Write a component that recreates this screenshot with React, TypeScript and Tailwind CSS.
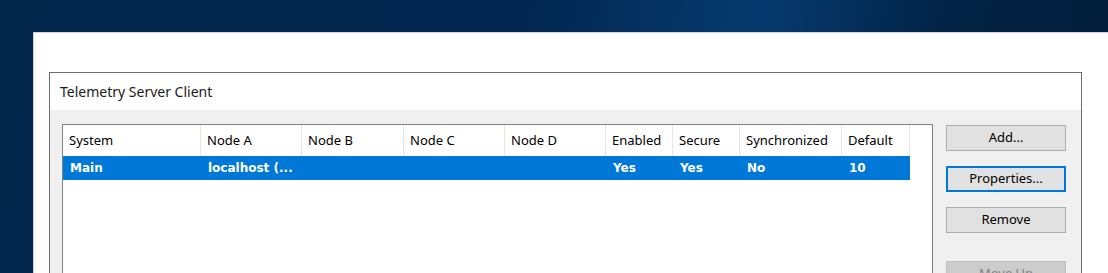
import React from 'react';

const columns = [
  { label: 'System', width: 'w-[138px]', value: 'Main' },
  { label: 'Node A', width: 'w-[101px]', value: 'localhost (...' },
  { label: 'Node B', width: 'w-[102px]', value: '' },
  { label: 'Node C', width: 'w-[101px]', value: '' },
  { label: 'Node D', width: 'w-[101px]', value: '' },
  { label: 'Enabled', width: 'w-[67px]', value: 'Yes' },
  { label: 'Secure', width: 'w-[67px]', value: 'Yes' },
  { label: 'Synchronized', width: 'w-[102px]', value: 'No' },
  { label: 'Default', width: 'w-[68px]', value: '10' },
];

const ui = { fontFamily: '"Segoe UI", "Noto Sans", sans-serif' };
const bold = { fontFamily: 'Tahoma, "DejaVu Sans", sans-serif' };

const Button = ({ label, focused, disabled }: { label: string; focused?: boolean; disabled?: boolean }) => (
  <button
    className={
      focused
        ? 'w-[120px] h-[26px] bg-[#e1e1e1] border-2 border-[#0078d7] text-[13px] text-black'
        : disabled
        ? 'w-[120px] h-[26px] bg-[#cccccc] border border-[#bfbfbf] text-[13px] text-[#838383]'
        : 'w-[120px] h-[26px] bg-[#e1e1e1] border border-[#adadad] text-[13px] text-black'
    }
    style={ui}
  >
    {label}
  </button>
);

export default function App() {
  return (
    <div className="w-[1108px] h-[273px] overflow-hidden flex flex-col bg-[linear-gradient(100deg,#03264b_0%,#022650_45%,#063a6e_66%,#022346_82%,#011b38_100%)]">
      <div className="h-[32px] shrink-0" />
      <div className="flex-1 ml-[33px] bg-white border-t border-l border-[#c9d2de] pt-[39px] pl-[15px] flex">
        <div className="w-[1033px] border-t border-l border-r border-[#6e6e6e] flex flex-col">
          <div className="h-[37px] bg-white flex items-center pl-[10px] text-[14px] text-[#1a1a1a]" style={ui}>
            Telemetry Server Client
          </div>
          <div className="flex-1 bg-[#f0f0f0] flex pt-[14px] pl-[12px] gap-[13px]">
            <div className="w-[871px] border-t border-l border-r border-[#828282] bg-white flex flex-col">
              <div className="flex h-[31px]">
                {columns.map((c) => (
                  <div
                    key={c.label}
                    className={`${c.width} shrink-0 border-r border-[#e5e5e5] flex items-center pl-[6px] pt-[1px] text-[13px] text-black`}
                    style={ui}
                  >
                    {c.label}
                  </div>
                ))}
              </div>
              <div className="flex h-[24px]">
                <div className="flex bg-[#0078d7]">
                  {columns.map((c) => (
                    <div
                      key={c.label}
                      className={`${c.width} shrink-0 flex items-center pl-[7px] text-[12px] font-bold text-white`}
                      style={bold}
                    >
                      {c.value}
                    </div>
                  ))}
                </div>
              </div>
            </div>
            <div className="flex flex-col pt-[1px]">
              <Button label="Add..." />
              <div className="h-[15px]" />
              <Button label="Properties..." focused />
              <div className="h-[15px]" />
              <Button label="Remove" />
              <div className="h-[28px]" />
              <Button label="Move Up" disabled />
            </div>
          </div>
        </div>
      </div>
    </div>
  );
}
